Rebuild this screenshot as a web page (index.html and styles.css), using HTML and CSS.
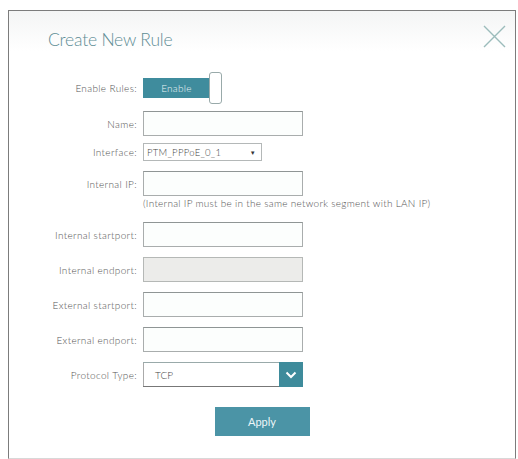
FILE: index.html
```html
<!DOCTYPE html>
<html>
<head>
<meta charset="utf-8">
<link rel="stylesheet" href="styles.css">
</head>
<body>
<div class="dialog">
  <div class="head">
    <h1 class="title">Create New Rule</h1>
    <svg class="close" width="23" height="23" viewBox="0 0 23 23"><path d="M1 1L22 22M22 1L1 22" stroke="#9bbcbb" stroke-width="1.4" fill="none"/></svg>
  </div>
  <div class="form">
    <div class="row row-enable">
      <span class="label">Enable Rules:</span>
      <div class="toggle">
        <span class="toggle-on">Enable</span>
        <span class="knob"></span>
      </div>
    </div>
    <div class="row row-name">
      <span class="label">Name:</span>
      <span class="input"></span>
    </div>
    <div class="row row-iface">
      <span class="label">Interface:</span>
      <span class="select-sm"><span>PTM_PPPoE_0_1</span><span class="tri">&#9660;</span></span>
    </div>
    <div class="row row-ip">
      <span class="label">Internal IP:</span>
      <span class="input"></span>
    </div>
    <div class="hint">(Internal IP must be in the same network segment with LAN IP)</div>
    <div class="row row-port first">
      <span class="label">Internal startport:</span>
      <span class="input"></span>
    </div>
    <div class="row row-port">
      <span class="label">Internal endport:</span>
      <span class="input disabled"></span>
    </div>
    <div class="row row-port">
      <span class="label">External startport:</span>
      <span class="input"></span>
    </div>
    <div class="row row-port">
      <span class="label">External endport:</span>
      <span class="input"></span>
    </div>
    <div class="row row-port">
      <span class="label">Protocol Type:</span>
      <span class="select-lg"><span class="val">TCP</span><span class="chev"><svg width="12" height="8" viewBox="0 0 12 8"><path d="M1.5 1.5L6 6L10.5 1.5" stroke="#fff" stroke-width="2" fill="none"/></svg></span></span>
    </div>
    <div class="actions">
      <button class="apply">Apply</button>
    </div>
  </div>
</div>
</body>
</html>
```
FILE: styles.css
```css
html, body { margin: 0; padding: 0; background: #fff; }
body { font-family: Lato, "Open Sans", sans-serif; color: #555; }
.dialog {
  margin: 10px 0 0 8px;
  width: 506px;
  height: 447px;
  border: 1px solid #7c7c7c;
  border-bottom-color: #d8d8d8;
  background: linear-gradient(#f4f5f5 0, #fff 40px);
  box-sizing: content-box;
}
.head { display: flex; justify-content: space-between; align-items: flex-start; }
.title {
  margin: 19px 0 0 39px;
  font-size: 17.5px;
  font-weight: 300;
  line-height: 20px;
  color: #5f8d95;
  letter-spacing: -0.2px;
}
.close { margin: 14px 9px 0 0; }
.form { display: flex; flex-direction: column; }
.row { display: flex; align-items: center; gap: 6px; }
.label {
  width: 128px;
  text-align: right;
  font-size: 10px;
  font-weight: 300;
  letter-spacing: 0.35px;
  color: #555;
  flex: none;
}
.row-enable { margin-top: 22px; height: 31px; }
.toggle { display: flex; align-items: center; }
.toggle-on {
  width: 67px; height: 20px;
  background: #3f8c9d;
  color: #e8f3f5;
  font-size: 10px;
  font-weight: 300;
  letter-spacing: 0.3px;
  display: flex; align-items: center; justify-content: center;
}
.knob {
  width: 11px; height: 30px;
  border: 1px solid #9aa;
  border-radius: 3px;
  background: #fff;
  margin-left: -1px;
}
.input {
  width: 158px; height: 23px;
  border: 1px solid #a9adad;
  border-top-color: #8f9595;
  background: #fcfefd;
  flex: none;
}
.input.disabled { background: #ececea; border-color: #b5b8b6; }
.row-name { margin-top: 8px; }
.row-iface { margin-top: 7px; }
.select-sm {
  width: 109px; height: 16px;
  border: 1px solid #b4b8b8;
  background: #fff;
  display: flex; align-items: center; justify-content: space-between;
  padding: 0 5px 0 3px;
  font-size: 9.5px;
  font-weight: 300;
  letter-spacing: 0.3px;
  color: #444;
}
.tri { font-size: 6px; color: #333; }
.row-ip { margin-top: 10px; }
.hint {
  margin: 1px 0 0 134px;
  font-size: 10px;
  font-weight: 300;
  letter-spacing: 0.28px;
  color: #555;
  line-height: 12px;
}
.row-port { margin-top: 10px; }
.row-port.first { margin-top: 13px; }
.select-lg {
  width: 160px; height: 25px;
  border-top: 1px solid #9aa;
  border-bottom: 1px solid #777;
  background: #fff;
  display: flex; align-items: center;
  box-sizing: border-box;
}
.select-lg .val {
  flex: 1;
  padding-left: 11px;
  font-size: 10px;
  font-weight: 300;
  color: #444;
  border-left: 1px solid #aaa;
  height: 100%;
  display: flex; align-items: center;
}
.chev {
  width: 24px; height: 25px;
  margin: -1px 0;
  background: #3e8b9b;
  display: flex; align-items: center; justify-content: center;
}
.actions { display: flex; justify-content: center; margin-top: 20px; }
.apply {
  width: 95px; height: 29px;
  border: none;
  background: #4b94a6;
  color: #eef6f8;
  font-family: Lato, sans-serif;
  font-size: 11px;
}
```
